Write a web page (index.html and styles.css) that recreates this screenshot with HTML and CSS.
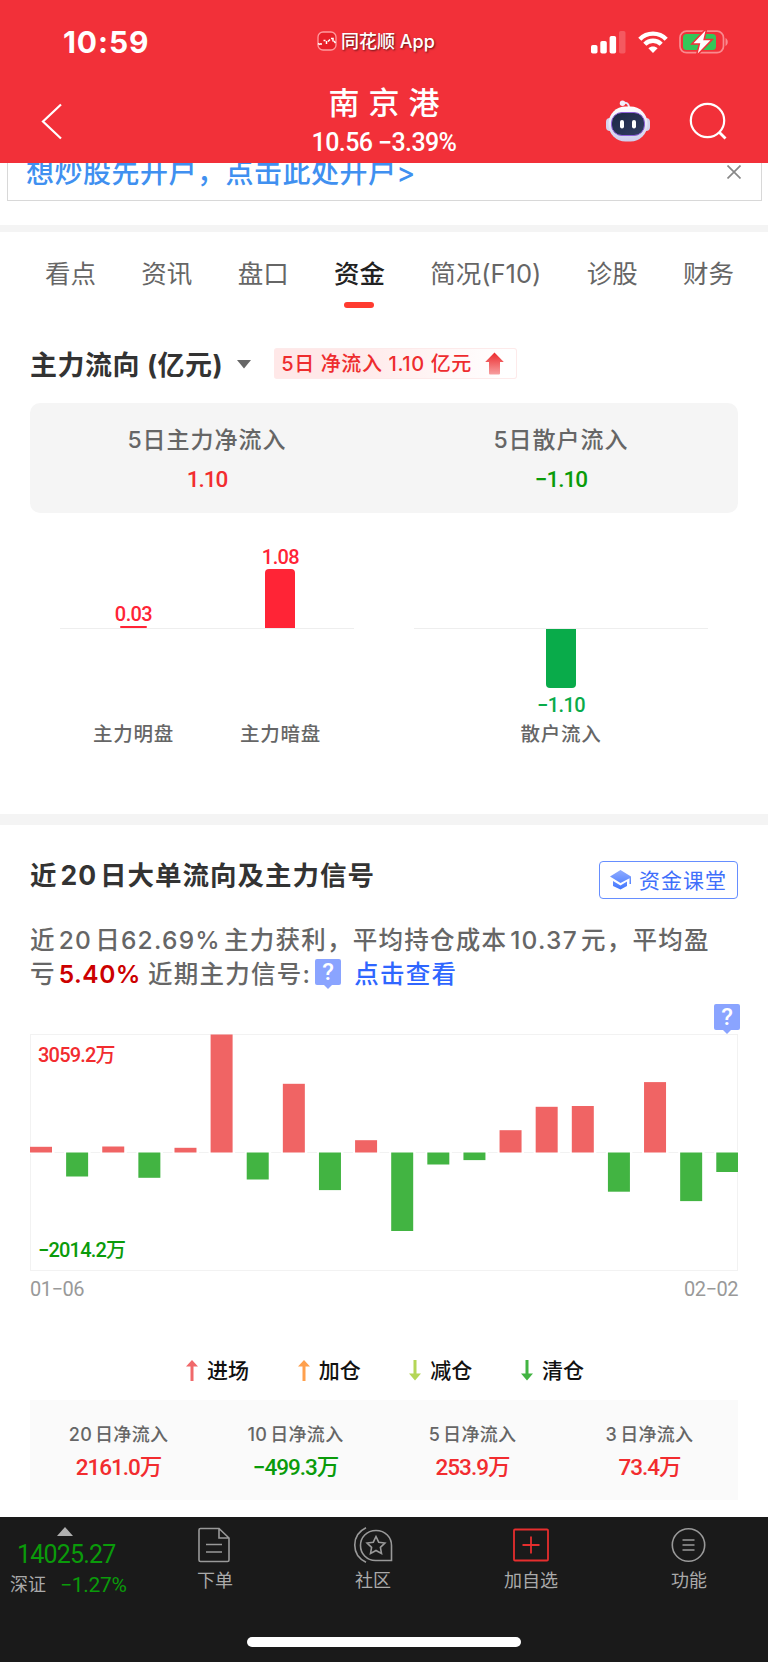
FILE: index.html
```html
<!DOCTYPE html>
<html lang="zh-CN">
<head>
    <meta charset="UTF-8">
    <meta name="viewport" content="width=device-width, initial-scale=1.0">
    <title>南京港 - 资金</title>
    <link rel="stylesheet" href="styles.css">
</head>
<body>
    <header class="header">
        <div class="status-bar">
            <div class="time">10:59</div>
            <div class="app-name">
                <svg width="20" height="20" viewBox="0 0 20 20">
                    <rect x="1" y="1" width="18" height="18" rx="5" fill="#e8202a" stroke="#ff9a9e" stroke-width="1.3"/>
                    <path d="M1 12.500l2 1M4 14v-2M6.500 9.500h2M9.500 10v3M11 10.500l2-2M14 7.500h2v3M17 10l1.500 2" fill="none" stroke="#fff" stroke-width="1.5"/>
                </svg>
                <span>同花顺 App</span>
            </div>
            <div class="status-icons">
                <svg width="35" height="23" viewBox="0 0 35 23" fill="#fff">
                    <rect x="0" y="14" width="6.5" height="8.5" rx="1.8"/>
                    <rect x="9.3" y="10" width="6.5" height="12.5" rx="1.8"/>
                    <rect x="18.6" y="5" width="6.5" height="17.5" rx="1.8"/>
                    <rect x="28" y="0" width="6.5" height="22.5" rx="1.8" opacity=".2"/>
                </svg>
                <svg class="wifi" width="30" height="23" viewBox="0 0 30 23" fill="none" stroke="#fff" stroke-width="4.4">
                    <path d="M1.8 8.2C9 .8 21 .8 28.2 8.2"/>
                    <path d="M6.8 13.2C11.4 8.6 18.6 8.6 23.2 13.2"/>
                    <path d="M15 22l-4.6-4.8c2.6-2.4 6.6-2.4 9.2 0z" fill="#fff" stroke="none"/>
                </svg>
                <svg width="50" height="24" viewBox="0 0 50 24">
                    <rect x="1" y="1.2" width="43.5" height="21.5" rx="6.5" fill="none" stroke="#f98a8f" stroke-width="1.7"/>
                    <path d="M46.5 8v8c3-1.600 3-6.400 0-8z" fill="#f98a8f"/>
                    <rect x="4" y="4" width="33" height="16" rx="3.5" fill="#34c759"/>
                    <path d="M26.500 .5L14.500 13.300h6.800L18.700 23.500 31.500 10.300h-7.300z" fill="#fff" stroke="#f23039" stroke-width="3" paint-order="stroke"/>
                </svg>
            </div>
        </div>
        <div class="title-bar">
            <svg class="back" width="22" height="38" viewBox="0 0 22 38">
                <path d="M20 1.500L2 18.500 20 35.500" fill="none" stroke="#fff" stroke-width="2.200"/>
            </svg>
            <div class="stock">
                <h1>南京港</h1>
                <p class="num">10.56 −3.39%</p>
            </div>
            <div class="title-actions">
                <svg width="46" height="44" viewBox="0 0 46 44">
                    <defs>
                        <linearGradient id="face" x1="0" y1="0" x2="1" y2="1">
                            <stop offset="0" stop-color="#1c2745"/>
                            <stop offset="1" stop-color="#333c60"/>
                        </linearGradient>
                        <linearGradient id="shell" x1="0" y1="0" x2="0" y2="1">
                            <stop offset="0" stop-color="#fff"/>
                            <stop offset="1" stop-color="#cfcdec"/>
                        </linearGradient>
                    </defs>
                    <path d="M17 3c4-1 7 0 7 5" fill="none" stroke="#e9e6f6" stroke-width="2"/>
                    <circle cx="17.500" cy="3.200" r="2.700" fill="#f2effb"/>
                    <rect x="1" y="18" width="8" height="13" rx="4" fill="#d5d3ee"/>
                    <rect x="37" y="18" width="8" height="13" rx="4" fill="#d5d3ee"/>
                    <rect x="3.500" y="6.500" width="39" height="35" rx="17" fill="url(#shell)"/>
                    <rect x="6.500" y="12.500" width="33" height="23" rx="10.500" fill="url(#face)" stroke="#8d5fd8" stroke-width="1"/>
                    <rect x="15" y="20" width="4" height="8.500" rx="2" fill="#fff"/>
                    <rect x="27" y="20" width="4" height="8.500" rx="2" fill="#fff"/>
                </svg>
                <svg width="38" height="38" viewBox="0 0 38 38" fill="none" stroke="#fff" stroke-width="2.200">
                    <circle cx="18.500" cy="18.500" r="16.700"/>
                    <path d="M30 30l6.500 6.500" stroke-width="2.800"/>
                </svg>
            </div>
        </div>
    </header>

    <div class="ad-wrap">
        <div class="ad">
            <a class="ad-text">想炒股先开户，点击此处开户&gt;</a>
            <svg width="14" height="14" viewBox="0 0 14 14">
                <path d="M.5 .5l13 13M13.500 .5l-13 13" stroke="#888" stroke-width="1.700"/>
            </svg>
        </div>
    </div>

    <nav class="tabs">
        <a>看点</a>
        <a>资讯</a>
        <a>盘口</a>
        <a class="active">资金</a>
        <a>简况(F10)</a>
        <a>诊股</a>
        <a>财务</a>
    </nav>

    <section class="flow">
        <div class="flow-head">
            <h2>主力流向 (亿元)</h2>
            <svg class="caret" width="14" height="9" viewBox="0 0 14 9"><path d="M0 0h14L7 8.500z" fill="#666"/></svg>
            <div class="tag">
                <span>5日 净流入 1.10 亿元</span>
                <svg width="19" height="23" viewBox="0 0 19 23">
                    <defs>
                        <linearGradient id="up" x1="0" y1="0" x2="0" y2="1">
                            <stop offset="0" stop-color="#ec2a2c"/>
                            <stop offset="1" stop-color="#f79fa0"/>
                        </linearGradient>
                    </defs>
                    <path d="M9.500 .5l9.300 9.500H15v11.500a1 1 0 0 1-1 1H5a1 1 0 0 1-1-1V10H.2z" fill="url(#up)"/>
                </svg>
            </div>
        </div>
        <div class="summary">
            <div>
                <p class="label">5日主力净流入</p>
                <p class="num red">1.10</p>
            </div>
            <div>
                <p class="label">5日散户流入</p>
                <p class="num green">−1.10</p>
            </div>
        </div>
        <div class="compare">
            <div class="group">
                <div class="col">
                    <div class="upper"><span class="num">0.03</span><i class="bar tiny"></i></div>
                    <div class="lower"></div>
                    <p>主力明盘</p>
                </div>
                <div class="col">
                    <div class="upper"><span class="num">1.08</span><i class="bar"></i></div>
                    <div class="lower"></div>
                    <p>主力暗盘</p>
                </div>
            </div>
            <div class="group">
                <div class="col">
                    <div class="upper"></div>
                    <div class="lower"><i class="bar"></i><span class="num">−1.10</span></div>
                    <p>散户流入</p>
                </div>
            </div>
        </div>
    </section>

    <section class="signal">
        <div class="signal-head">
            <h2>近<span class="n">20</span>日大单流向及主力信号</h2>
            <a class="class-btn">
                <svg width="22" height="20" viewBox="0 0 22 20">
                    <defs>
                        <linearGradient id="cap" x1="0" y1="0" x2="0" y2="1">
                            <stop offset="0" stop-color="#8fabff"/>
                            <stop offset="1" stop-color="#4277ff"/>
                        </linearGradient>
                    </defs>
                    <path d="M10.500 0L21 6.500V14h-1.500V8.200L10.500 13 0 6.500zM3 11l7.500 4.500L17 11.500V16l-6.500 3.500L3 16z" fill="url(#cap)"/>
                </svg>
                <span>资金课堂</span>
            </a>
        </div>
        <p class="desc">近<span class="n">20</span>日<span class="d">62.69%</span>主力获利，平均持仓成本<span class="n">10.37</span>元，平均盈<br>亏<b class="n">5.40%</b><span class="recent">近期主力信号:</span><span class="help">?</span><a>点击查看</a></p>

        <div class="chart">
            <span class="help chart-help">?</span>
            <span class="max num red">3059.2万</span>
            <span class="min num green">−2014.2万</span>
            <svg id="bars" width="708" height="237" viewBox="0 0 708 237"></svg>
        </div>
        <div class="dates num"><span>01−06</span><span>02−02</span></div>

        <div class="legend">
            <span><svg width="12" height="22" viewBox="0 0 12 22" fill="#f0696a"><path d="M6 0l6 6.500H7.500V21h-3V6.500H0z"/></svg>进场</span>
            <span><svg width="12" height="22" viewBox="0 0 12 22" fill="#ffa04d"><path d="M6 0l6 6.500H7.500V21h-3V6.500H0z"/></svg>加仓</span>
            <span><svg width="12" height="22" viewBox="0 0 12 22" fill="#b4d657"><path d="M4.500 0h3v13.500H12L6 20.500 0 13.500h4.500z"/></svg>减仓</span>
            <span><svg width="12" height="22" viewBox="0 0 12 22" fill="#42b442"><path d="M4.500 0h3v13.500H12L6 20.500 0 13.500h4.500z"/></svg>清仓</span>
        </div>

        <div class="totals">
            <div><p><span class="d">20</span>日净流入</p><b class="num red">2161.0万</b></div>
            <div><p><span class="d">10</span>日净流入</p><b class="num green">−499.3万</b></div>
            <div><p><span class="d">5</span>日净流入</p><b class="num red">253.9万</b></div>
            <div><p><span class="d">3</span>日净流入</p><b class="num red">73.4万</b></div>
        </div>
    </section>

    <footer class="footer">
        <div class="toolbar">
            <div class="index">
                <svg width="16" height="9" viewBox="0 0 16 9"><path d="M8 0l8 9H0z" fill="#b0b0b0"/></svg>
                <div class="num index-value">14025.27</div>
                <div class="index-row"><span>深证</span><span class="num">−1.27%</span></div>
            </div>
            <a class="item">
                <svg width="36" height="36" viewBox="0 0 36 36" fill="none" stroke="#999" stroke-width="1.600">
                    <path d="M22 1.500H3.500A1.500 1.500 0 0 0 2 3v30a1.500 1.500 0 0 0 1.500 1.500h27A1.500 1.500 0 0 0 32 33V11zV11h9.500"/>
                    <path d="M9 17.500h16M9 25h16"/>
                </svg>
                <span>下单</span>
            </a>
            <a class="item">
                <svg width="40" height="36" viewBox="0 0 40 36" fill="none" stroke="#999" stroke-width="1.600">
                    <path d="M13 .8C-2 8-2 28 13 35.200"/>
                    <path d="M38.500 33.500H22.500C13.500 33.500 7.500 26.500 7.500 18.500S13.500 3.500 23 3.500s15.500 7 15.500 15z"/>
                    <path d="M23 9.500l2.700 5.700 6.200.8-4.500 4.300 1.100 6.200-5.500-3-5.500 3 1.100-6.200-4.500-4.300 6.200-.8z"/>
                </svg>
                <span>社区</span>
            </a>
            <a class="item">
                <svg width="36" height="36" viewBox="0 0 36 36" fill="none" stroke="#e62e2e" stroke-width="1.800">
                    <rect x="1" y="2.500" width="34" height="31" rx="1"/>
                    <path d="M9.500 18h17M18 9.500v17"/>
                </svg>
                <span>加自选</span>
            </a>
            <a class="item">
                <svg width="36" height="36" viewBox="0 0 36 36" fill="none" stroke="#999" stroke-width="1.600">
                    <circle cx="17.500" cy="18" r="16.200"/>
                    <path d="M11.500 13h12M11.500 18h12M11.500 23h12"/>
                </svg>
                <span>功能</span>
            </a>
        </div>
        <div class="home-bar"></div>
    </footer>

    <script>
        // 近20日大单净流入（柱高）
        const flows = [5.7, -24, 6, -25.3, 4.7, 118, -27, 68.7, -37.6, 12.3,
            -78.5, -12, -7.6, 22.3, 45.7, 46.5, -39.2, 70.4, -48.6, -19.5];
        const zero = 118;
        let html = `<path d="M0 ${zero}.5H708" stroke="#f2f2f2"/>`;

        flows.forEach((v, i) => {
            const x = i * 36.12;
            const y = v > 0 ? zero - v + 0.5 : zero + 0.5;
            const color = v > 0 ? '#f06464' : '#42b442';
            html += `<rect x="${x - 2}" y="${zero - 1}" width="26.5" height="3" fill="#fff"/>`;
            html += `<rect x="${x}" y="${y}" width="22" height="${Math.abs(v)}" fill="${color}"/>`;
        });
        document.getElementById('bars').innerHTML = html;
    </script>
</body>
</html>
```

FILE: styles.css
```css
* {
    box-sizing: border-box;
}
body {
    margin: 0;
    background: #fff;
    color: #666;
    font-family: Inter, "Noto Sans CJK SC", sans-serif;
}
h1, h2, p {
    margin: 0;
}
svg {
    display: block;
    flex: none;
}
.num {
    font-family: Roboto, "Noto Sans CJK SC", sans-serif;
    font-weight: 500;
}
.red {
    color: #f22c2f;
}
.green {
    color: #0a9b0a;
}

/* header */
.header {
    height: 163px;
    background: #f23039;
    color: #fff;
}
.status-bar {
    display: flex;
    align-items: center;
    height: 84px;
    padding: 0 39px 0 63px;
}
.time {
    width: 254px;
    font-size: 30px;
    font-weight: 700;
    letter-spacing: 0.9px;
}
.app-name {
    display: flex;
    align-items: center;
    gap: 4px;
    margin-top: -2px;
    font-size: 18px;
    font-weight: 500;
    line-height: 26px;
    text-shadow: 1px 1px 2px rgba(0,0,0,0.6);
    white-space: nowrap;
}
.app-name span {
    margin-top: 2px;
}
.status-icons {
    display: flex;
    align-items: center;
    margin-left: auto;
}
.wifi {
    margin: 0 11px 0 12px;
}
.title-bar {
    display: flex;
    justify-content: space-between;
    height: 79px;
    padding: 0 41px 0 41px;
}
.back {
    margin-top: 19px;
}
.stock {
    margin-left: 100px;
    text-align: center;
}
.stock h1 {
    height: 39px;
    padding-left: 9px;
    font-size: 31px;
    font-weight: 500;
    line-height: 38px;
    letter-spacing: 9px;
}
.stock p {
    font-size: 25px;
    line-height: 40px;
    letter-spacing: -0.6px;
}
.title-actions {
    display: flex;
    gap: 38px;
    padding-top: 16px;
}
.title-actions svg + svg {
    margin-top: 2px;
}

/* ad banner */
.ad-wrap {
    height: 69px;
    padding: 0 6px 0 7px;
    border-bottom: 7px solid #f4f4f4;
}
.ad {
    display: flex;
    justify-content: space-between;
    height: 38px;
    padding: 0 20px 0 18px;
    border: 1px solid #d8d8d8;
    border-top: 0;
    overflow: hidden;
}
.ad-text {
    margin-top: -10px;
    color: #4090f0;
    font-size: 28px;
    font-weight: 500;
    line-height: 40px;
    letter-spacing: 0.5px;
}
.ad svg {
    margin-top: 2px;
}

/* tabs */
.tabs {
    display: flex;
    justify-content: space-between;
    height: 82px;
    padding: 21px 34px 0 45px;
    font-size: 25.5px;
    line-height: 42px;
    white-space: nowrap;
}
.tabs .active {
    color: #222;
    font-weight: 500;
}
.tabs .active::after {
    content: "";
    display: block;
    width: 30px;
    height: 6px;
    margin: 7px auto 0;
    border-radius: 3px;
    background: #ff3b30;
}

/* main flow */
.flow {
    height: 511px;
    padding: 34px 30px 0;
    border-bottom: 11px solid #f4f4f4;
}
.flow-head {
    display: flex;
    align-items: center;
    height: 32px;
}
h2 {
    color: #333;
    font-size: 27px;
    font-weight: 700;
    white-space: nowrap;
}
.flow-head h2 {
    margin-top: -2px;
    letter-spacing: 0.5px;
}
.caret {
    margin: 0 23px 0 14px;
}
.tag {
    display: flex;
    align-items: center;
    justify-content: space-between;
    width: 243px;
    height: 31px;
    margin-top: -1px;
    padding: 0 12px 0 7px;
    border: 1px solid #fdeaea;
    border-left: 0;
    border-radius: 3px;
    background: linear-gradient(90deg, #ffe8e8 30%, #fff 95%);
    color: #ee2c2e;
    font-size: 20px;
    font-weight: 500;
    letter-spacing: 0.6px;
    white-space: nowrap;
}
.tag span {
    margin-top: -2px;
}
.summary {
    display: grid;
    grid-template-columns: 354px 354px;
    height: 110px;
    margin-top: 23px;
    padding-top: 20px;
    border-radius: 10px;
    background: #f5f5f5;
    text-align: center;
}
.summary .label {
    font-size: 23px;
    font-weight: 500;
    line-height: 34px;
    letter-spacing: 1px;
}
.summary .num {
    font-size: 22.5px;
    line-height: 44px;
    letter-spacing: -1px;
}
.compare {
    display: flex;
    gap: 60px;
    padding: 0 30px;
}
.group {
    display: flex;
    width: 294px;
    background: linear-gradient(#eee, #eee) 0 115px / 100% 1px no-repeat;
}
.col {
    display: flex;
    flex: 1;
    flex-direction: column;
    align-items: center;
}
.upper, .lower {
    display: flex;
    flex-direction: column;
    align-items: center;
    font-size: 20px;
    line-height: 24px;
}
.upper {
    justify-content: flex-end;
    height: 115px;
    color: #ff2436;
}
.lower {
    height: 92px;
    padding-top: 1px;
    color: #09ab4a;
}
.bar {
    width: 30px;
    height: 59px;
    background: #ff2436;
}
.upper .bar {
    border-radius: 4px 4px 0 0;
}
.upper .num, .lower .num {
    letter-spacing: -0.6px;
}
.upper .bar.tiny {
    width: 27px;
    height: 2px;
    border-radius: 1px;
}
.lower .bar {
    margin-bottom: 5px;
    border-radius: 0 0 4px 4px;
    background: #09ab4a;
}
.col p {
    font-size: 19.5px;
    font-weight: 500;
    line-height: 28px;
    letter-spacing: 0.7px;
}

/* 20 day signal */
.signal {
    padding: 36px 30px 17px;
}
.n {
    margin: 0 3px;
}
.d {
    margin-right: 3px;
}
.signal-head {
    display: flex;
    justify-content: space-between;
}
.signal-head h2 {
    font-size: 26.5px;
    line-height: 28px;
    letter-spacing: 1px;
}
.class-btn {
    display: flex;
    align-items: center;
    gap: 7px;
    width: 139px;
    height: 38px;
    padding-left: 10px;
    border: 1.5px solid #668eff;
    border-radius: 4px;
    color: #3f6ffb;
    font-size: 21px;
    letter-spacing: 1px;
    white-space: nowrap;
}
.class-btn span {
    margin-top: -3px;
}
.desc {
    margin-top: 25px;
    font-size: 24.5px;
    font-weight: 500;
    line-height: 33.5px;
    letter-spacing: 1.25px;
    white-space: nowrap;
}
.desc b {
    color: #c00;
    font-weight: 600;
    letter-spacing: 0.5px;
}
.desc a {
    margin-left: 13px;
    color: #2f66ff;
}
.recent {
    margin-left: 4px;
}
.help {
    display: inline-block;
    position: relative;
    width: 26px;
    height: 26px;
    border-radius: 2px;
    background: #8aa4ff;
    color: #fff;
    font-family: Roboto, sans-serif;
    font-size: 24px;
    font-weight: 500;
    line-height: 27px;
    letter-spacing: 0;
    text-align: center;
}
.desc .help {
    margin: -6px 0 -4px 4px;
    vertical-align: 3px;
}
.help::after {
    content: "";
    position: absolute;
    top: 26px;
    left: 9px;
    border: 4px solid transparent;
    border-top-color: #8aa4ff;
    border-bottom: 0;
}
.chart {
    position: relative;
    width: 708px;
    height: 237px;
    margin-top: 43px;
    box-shadow: inset 0 0 0 1px #f2f2f2;
}
.chart .chart-help {
    position: absolute;
    top: -30px;
    right: -2px;
}
.max, .min {
    position: absolute;
    left: 8px;
    font-size: 20px;
    line-height: 24px;
    letter-spacing: -0.8px;
}
.max {
    top: 9px;
}
.min {
    bottom: 9px;
}
.dates {
    display: flex;
    justify-content: space-between;
    color: #999;
    font-size: 20px;
    font-weight: 400;
    line-height: 36px;
    letter-spacing: -0.5px;
}
.legend {
    display: flex;
    justify-content: space-between;
    width: 398px;
    margin: 48px 0 0 156px;
    color: #111;
    font-size: 21px;
    font-weight: 500;
    line-height: 32px;
}
.legend span {
    display: flex;
    align-items: center;
    gap: 9px;
}
.totals {
    display: grid;
    grid-template-columns: repeat(4, 1fr);
    height: 100px;
    margin-top: 13px;
    padding-top: 21px;
    background: #fafafa;
    text-align: center;
}
.totals p {
    font-size: 18px;
    font-weight: 500;
    line-height: 28px;
    letter-spacing: 0.3px;
}
.totals b {
    display: block;
    font-size: 22.5px;
    font-weight: 500;
    line-height: 36px;
    letter-spacing: -1px;
}

/* footer */
.footer {
    height: 145px;
    background: #1a1a1a;
    color: #aaa;
}
.toolbar {
    display: flex;
    height: 120px;
    padding-top: 10px;
}
.index {
    width: 136px;
}
.index > svg {
    margin-left: 57px;
}
.index-value {
    padding-left: 17px;
    color: #0a9b0a;
    font-size: 25px;
    font-weight: 400;
    line-height: 38px;
    letter-spacing: -0.8px;
}
.index-row {
    display: flex;
    gap: 14px;
    padding-left: 10px;
    font-size: 18px;
    line-height: 22px;
}
.index-row .num {
    color: #0a9b0a;
    font-size: 21px;
    font-weight: 400;
    letter-spacing: -0.3px;
}
.item {
    display: flex;
    flex: 1;
    flex-direction: column;
    align-items: center;
    font-size: 18px;
    line-height: 32px;
}
.item span {
    margin-top: 2px;
}
.home-bar {
    width: 274px;
    height: 10px;
    margin: 0 auto;
    border-radius: 5px;
    background: #fff;
}
```
